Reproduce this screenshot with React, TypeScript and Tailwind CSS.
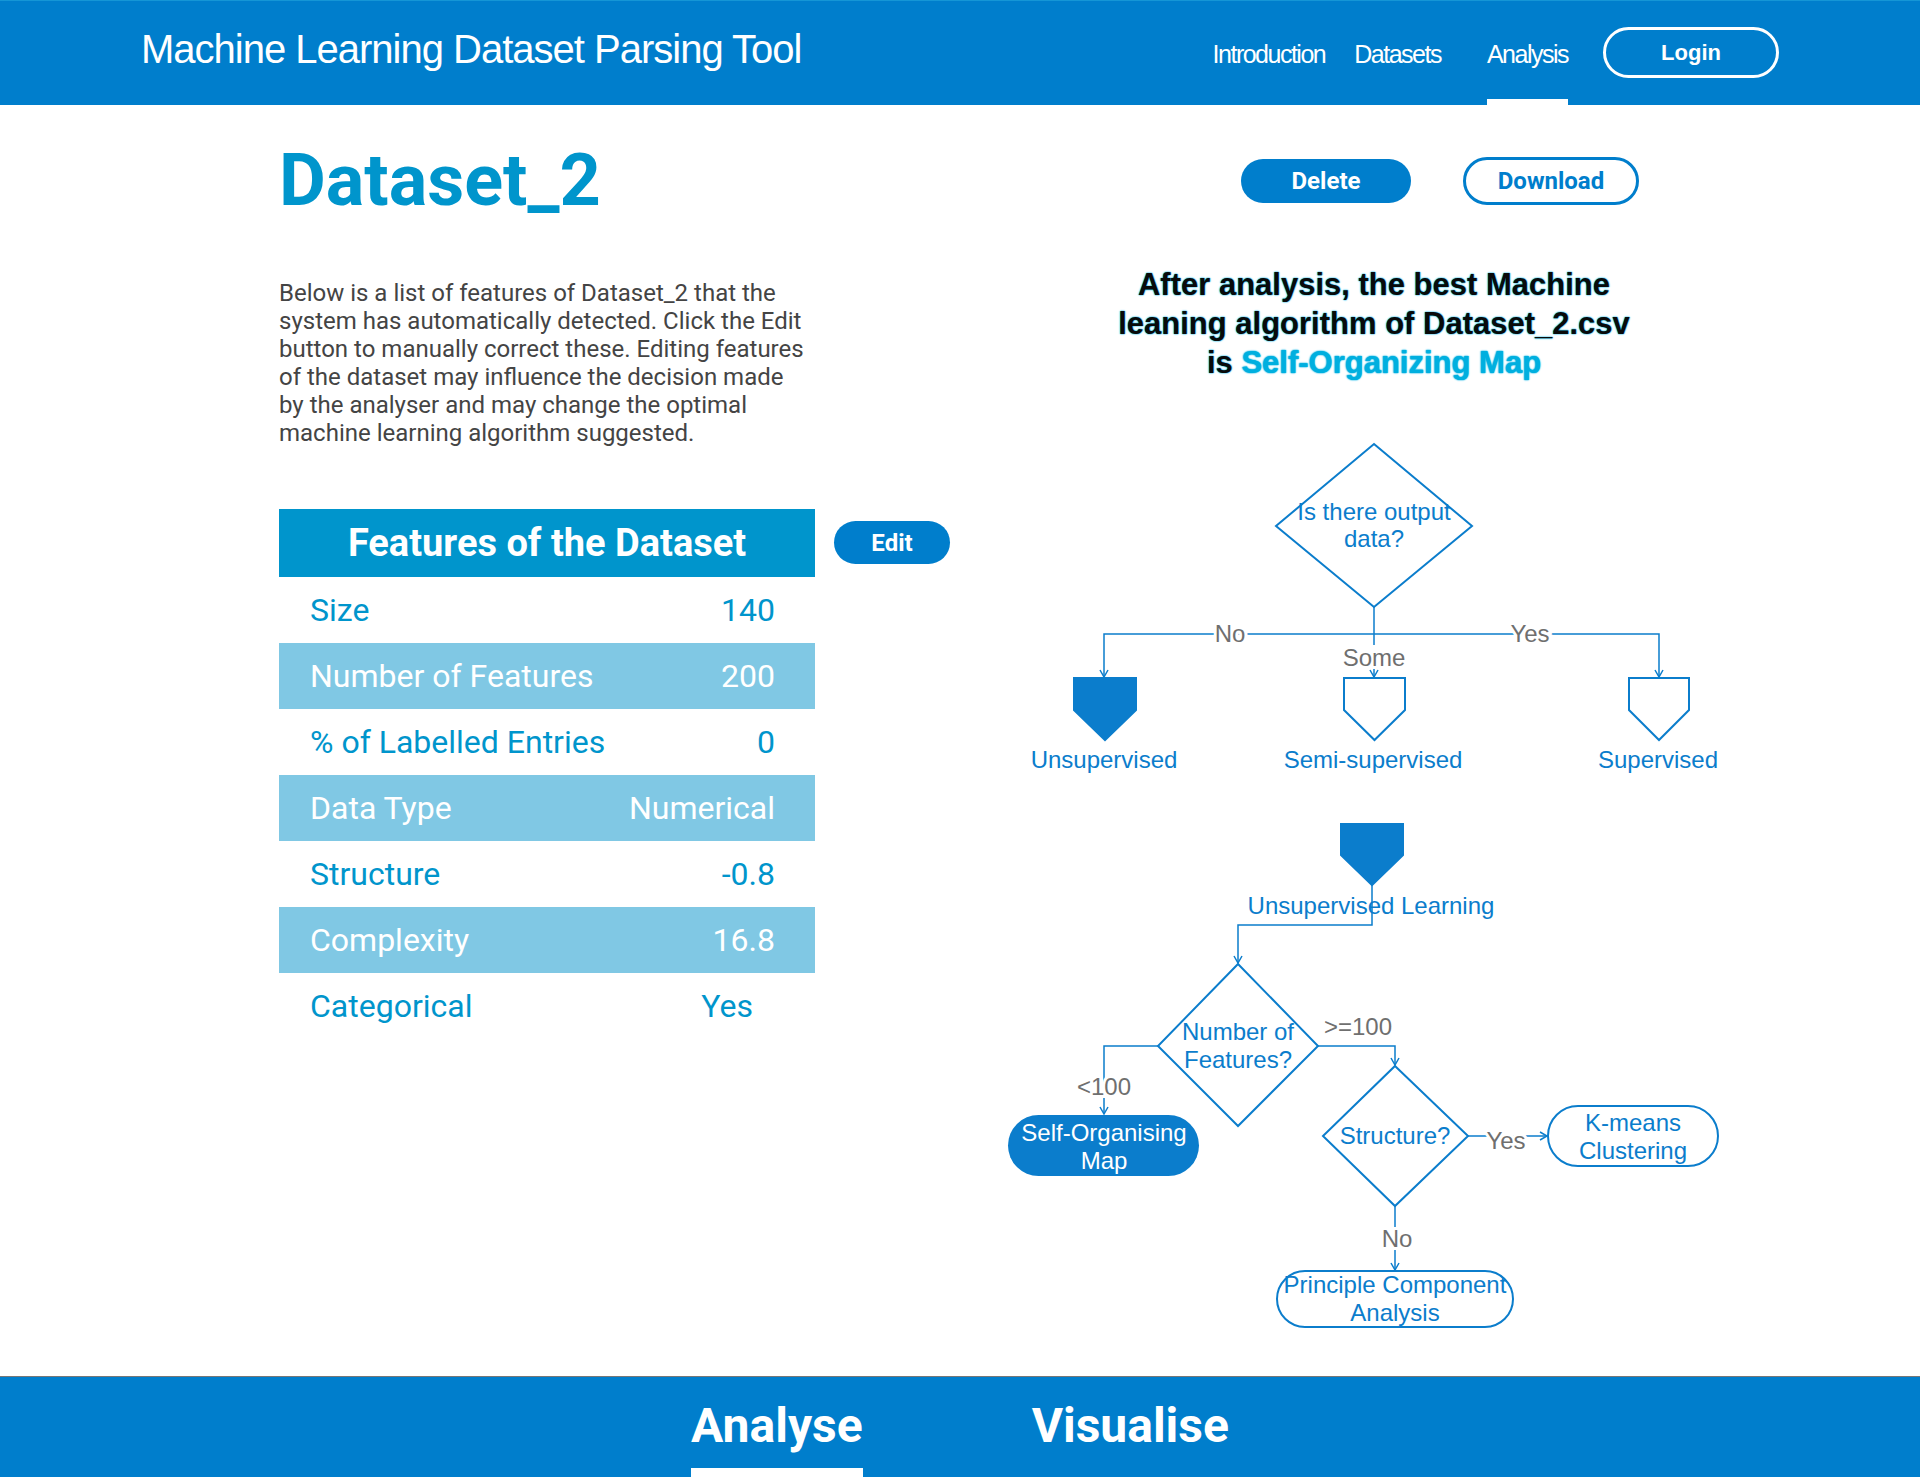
const STROKE = '#0b7dcc';
const GREY = '#6f6f6f';

const FEATURES = [
  { label: 'Size', value: '140' },
  { label: 'Number of Features', value: '200', shaded: true },
  { label: '% of Labelled Entries', value: '0' },
  { label: 'Data Type', value: 'Numerical', shaded: true },
  { label: 'Structure', value: '-0.8' },
  { label: 'Complexity', value: '16.8', shaded: true },
  { label: 'Categorical', value: 'Yes', inset: true },
];

function ArrowDown({ x, y }: { x: number; y: number }) {
  return <path d={`M${x - 4} ${y - 7} L${x} ${y} L${x + 4} ${y - 7}`} fill="none" stroke={STROKE} strokeWidth={1.5} />;
}

function ArrowRight({ x, y }: { x: number; y: number }) {
  return <path d={`M${x - 7} ${y - 4} L${x} ${y} L${x - 7} ${y + 4}`} fill="none" stroke={STROKE} strokeWidth={1.5} />;
}

// grey edge label with a white halo so it cuts the connector line
function EdgeLabel({ x, y, children }: { x: number; y: number; children: string }) {
  return (
    <text
      x={x}
      y={y}
      textAnchor="middle"
      fill={GREY}
      stroke="white"
      strokeWidth={6}
      paintOrder="stroke"
      fontSize={24}
    >
      {children}
    </text>
  );
}

function NodeText({ x, y, children, fill = STROKE }: { x: number; y: number; children: string; fill?: string }) {
  return (
    <text x={x} y={y} textAnchor="middle" fill={fill} fontSize={24}>
      {children}
    </text>
  );
}

function FlowChart() {
  return (
    <svg
      width={760}
      height={910}
      viewBox="1000 430 760 910"
      className="block font-['Liberation_Sans',Arial,sans-serif]"
    >
      {/* first decision */}
      <polygon points="1374,444 1472,526 1374,607 1276,526" fill="white" stroke={STROKE} strokeWidth={2} />
      <NodeText x={1374} y={520}>Is there output</NodeText>
      <NodeText x={1374} y={547}>data?</NodeText>

      <line x1={1374} y1={607} x2={1374} y2={645} stroke={STROKE} strokeWidth={1.5} />
      <polyline points="1104,676 1104,634 1659,634 1659,676" fill="none" stroke={STROKE} strokeWidth={1.5} />
      <line x1={1374} y1={668} x2={1374} y2={677} stroke={STROKE} strokeWidth={1.5} />
      <ArrowDown x={1104} y={677} />
      <ArrowDown x={1374} y={677} />
      <ArrowDown x={1659} y={677} />
      <EdgeLabel x={1230} y={642}>No</EdgeLabel>
      <EdgeLabel x={1530} y={642}>Yes</EdgeLabel>
      <EdgeLabel x={1374} y={666}>Some</EdgeLabel>

      <polygon points="1074,678 1136,678 1136,710 1105,740 1074,710" fill={STROKE} stroke={STROKE} strokeWidth={2} />
      <polygon points="1344,678 1405,678 1405,710 1374.5,740 1344,710" fill="white" stroke={STROKE} strokeWidth={2} />
      <polygon points="1629,678 1689,678 1689,710 1659,740 1629,710" fill="white" stroke={STROKE} strokeWidth={2} />
      <NodeText x={1104} y={768}>Unsupervised</NodeText>
      <NodeText x={1373} y={768}>Semi-supervised</NodeText>
      <NodeText x={1658} y={768}>Supervised</NodeText>

      {/* unsupervised branch */}
      <polygon points="1341,824 1403,824 1403,855 1372,885 1341,855" fill={STROKE} stroke={STROKE} strokeWidth={2} />
      <NodeText x={1371} y={914}>Unsupervised Learning</NodeText>
      <polyline points="1372,885 1372,925 1238,925 1238,963" fill="none" stroke={STROKE} strokeWidth={1.5} />
      <ArrowDown x={1238} y={963} />

      <polygon points="1238,964 1318,1046 1238,1126 1158,1046" fill="white" stroke={STROKE} strokeWidth={2} />
      <NodeText x={1238} y={1040}>Number of</NodeText>
      <NodeText x={1238} y={1068}>Features?</NodeText>

      <polyline points="1158,1046 1104,1046 1104,1114" fill="none" stroke={STROKE} strokeWidth={1.5} />
      <ArrowDown x={1104} y={1114} />
      <EdgeLabel x={1104} y={1095}>{'<100'}</EdgeLabel>

      <polyline points="1318,1046 1395,1046 1395,1065" fill="none" stroke={STROKE} strokeWidth={1.5} />
      <ArrowDown x={1395} y={1065} />
      <EdgeLabel x={1358} y={1035}>{'>=100'}</EdgeLabel>

      <rect x={1008} y={1115} width={191} height={61} rx={30.5} fill={STROKE} />
      <NodeText x={1104} y={1141} fill="white">Self-Organising</NodeText>
      <NodeText x={1104} y={1169} fill="white">Map</NodeText>

      <polygon points="1395,1066 1468,1136 1395,1206 1323,1136" fill="white" stroke={STROKE} strokeWidth={2} />
      <NodeText x={1395} y={1144}>Structure?</NodeText>

      <line x1={1468} y1={1136} x2={1547} y2={1136} stroke={STROKE} strokeWidth={1.5} />
      <ArrowRight x={1547} y={1136} />
      <EdgeLabel x={1506} y={1149}>Yes</EdgeLabel>

      <rect x={1548} y={1106} width={170} height={60} rx={30} fill="white" stroke={STROKE} strokeWidth={2} />
      <NodeText x={1633} y={1131}>K-means</NodeText>
      <NodeText x={1633} y={1159}>Clustering</NodeText>

      <line x1={1395} y1={1206} x2={1395} y2={1270} stroke={STROKE} strokeWidth={1.5} />
      <ArrowDown x={1395} y={1270} />
      <EdgeLabel x={1397} y={1247}>No</EdgeLabel>

      <rect x={1277} y={1271} width={236} height={56} rx={28} fill="white" stroke={STROKE} strokeWidth={2} />
      <NodeText x={1395} y={1293}>Principle Component</NodeText>
      <NodeText x={1395} y={1321}>Analysis</NodeText>
    </svg>
  );
}

function Header() {
  return (
    <header className="flex h-[105px] items-stretch border-t border-[#1596d6] bg-[#007ecc] px-[141px] text-white font-['Liberation_Sans',Arial,sans-serif]">
      <div className="flex items-center pb-[9px] text-[40px] tracking-[-1px]">
        Machine Learning Dataset Parsing Tool
      </div>
      <nav className="ml-auto flex items-stretch text-[25px] tracking-[-1.5px]">
        <a className="flex items-center border-b-[6px] border-transparent pt-[9px]">Introduction</a>
        <a className="ml-[29px] flex items-center border-b-[6px] border-transparent pt-[9px]">Datasets</a>
        <a className="ml-[46px] flex items-center border-b-[6px] border-white pt-[9px]">Analysis</a>
        <div className="ml-[35px] flex items-center pb-[1px]">
          <button className="h-[51px] w-[176px] rounded-full border-[3px] border-white text-[22px] font-bold tracking-normal">
            Login
          </button>
        </div>
      </nav>
    </header>
  );
}

function FeatureTable() {
  return (
    <div className="mt-[62px] flex items-start gap-[19px]">
      <div className="w-[536px] font-['Roboto',sans-serif]">
        <div className="flex h-[68px] items-center justify-center bg-[#0095cc] text-[38px] font-bold text-white">
          Features of the Dataset
        </div>
        {FEATURES.map((row) => (
          <div
            key={row.label}
            className={`flex h-[66px] items-center justify-between pl-[31px] text-[32px] ${
              row.inset ? 'pr-[62px]' : 'pr-[40px]'
            } ${row.shaded ? 'bg-[#80c8e4] text-white' : 'text-[#0095cc]'}`}
          >
            <span>{row.label}</span>
            <span>{row.value}</span>
          </div>
        ))}
      </div>
      <button className="mt-[12px] h-[43px] w-[116px] rounded-full bg-[#007ecc] font-['Roboto',sans-serif] text-[24px] font-bold text-white">
        Edit
      </button>
    </div>
  );
}

export default function App() {
  return (
    <div className="min-h-screen bg-white">
      <Header />
      <main className="flex h-[1271px] pl-[279px]">
        <section className="w-[721px] pt-[40px]">
          <h1 className="font-['Roboto',sans-serif] text-[72px] font-bold leading-none text-[#0095cc]">Dataset_2</h1>
          <p className="mt-[62px] font-['Roboto',sans-serif] text-[24px] leading-[28px] text-[#444444]">
            Below is a list of features of Dataset_2 that the
            <br />
            system has automatically detected. Click the Edit
            <br />
            button to manually correct these. Editing features
            <br />
            of the dataset may influence the decision made
            <br />
            by the analyser and may change the optimal
            <br />
            machine learning algorithm suggested.
          </p>
          <FeatureTable />
        </section>
        <section className="w-[760px]">
          <div className="flex items-center gap-[52px] pl-[241px] pt-[52px] font-['Roboto',sans-serif] text-[24px] font-bold">
            <button className="h-[44px] w-[170px] rounded-full bg-[#007ecc] text-white">Delete</button>
            <button className="h-[48px] w-[176px] rounded-full border-[3px] border-[#007ecc] text-[#007ecc]">
              Download
            </button>
          </div>
          <div className="mt-[60px] w-[748px] text-center font-['Liberation_Sans',Arial,sans-serif] text-[31px] font-bold leading-[39px] text-[#0a0a0a] [text-shadow:0_0_1.5px_#00b2e3,0_0_1.5px_#00b2e3]">
            After analysis, the best Machine
            <br />
            leaning algorithm of Dataset_2.csv
            <br />
            is <span className="text-[#00afdf]">Self-Organizing Map</span>
          </div>
          <div className="mt-[48px]">
            <FlowChart />
          </div>
        </section>
      </main>
      <footer className="flex h-[101px] justify-center gap-[169px] border-t border-[#777777] bg-[#007ecc] font-['Roboto',sans-serif] text-[48px] font-bold leading-none text-white">
        <a className="border-b-[9px] border-white pb-[18px] pt-[25px]">Analyse</a>
        <a className="border-b-[9px] border-transparent pb-[18px] pt-[25px]">Visualise</a>
      </footer>
    </div>
  );
}
